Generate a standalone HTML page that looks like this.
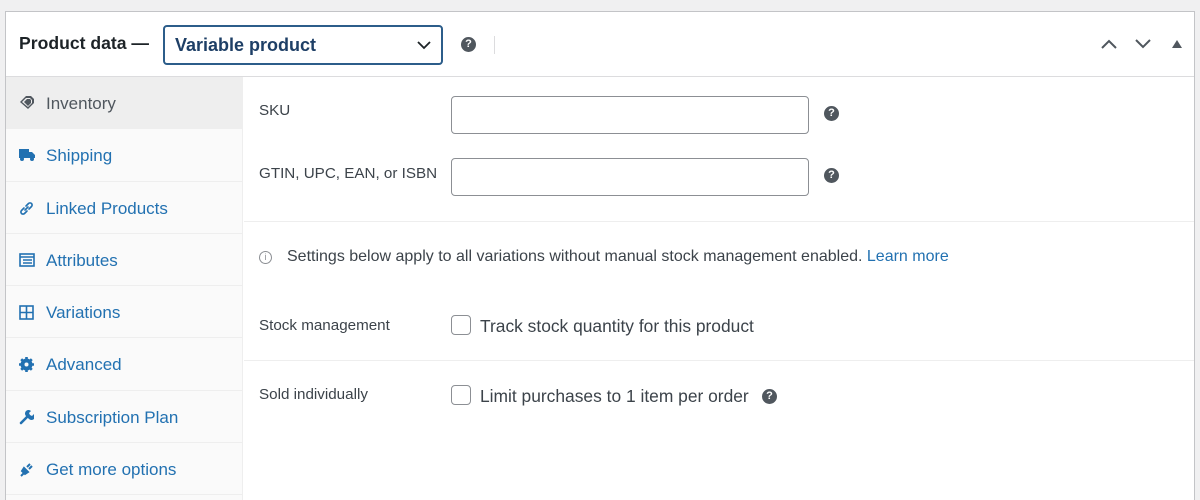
<!DOCTYPE html>
<html style="height:500px;overflow:hidden"><head><style>
*{box-sizing:border-box;margin:0;padding:0}
body{width:1200px;height:500px;background:#f0f0f1;font-family:"Liberation Sans",sans-serif;position:relative;overflow:hidden}
.box{position:absolute;left:5px;top:11px;width:1190px;height:489px;background:#fff;border:1px solid #c3c4c7;border-bottom:none}
.hdr{position:absolute;left:0;top:0;right:0;height:65px;border-bottom:1px solid #dcdcde}
.t{position:absolute;left:13px;top:21px;font-size:17.6px;font-weight:bold;color:#1d2327}
.sel{position:absolute;left:157px;top:13px;width:280px;height:40px;border:2px solid #2c5d8a;border-radius:4px;font-size:18px;font-weight:bold;color:#1e3f66;padding:8px 10px}
.q{position:absolute;width:15px;height:15px;border-radius:50%;background:#50575e;color:#fff;font-size:11px;font-weight:bold;text-align:center;line-height:15px}
.side{position:absolute;left:0;top:65px;width:237px;bottom:0;background:#fafafa;border-right:1px solid #eee}
.it{height:52.3px;border-bottom:1px solid #eee;color:#2271b1;font-size:17px;padding-left:40px;line-height:54px;position:relative}
.it.a{background:#eee;color:#50575e}
.it svg{position:absolute;left:13px;top:19px}
.lbl{position:absolute;font-size:15.2px;color:#3c434a}
.inp{position:absolute;left:445px;width:358px;height:38px;border:1px solid #8c8f94;border-radius:4px}
.cb{position:absolute;left:445px;width:20px;height:20px;border:1px solid #8c8f94;border-radius:4px}
.hr{position:absolute;left:238px;right:0;height:1px;background:#eee}
.ck{font-size:17.4px}
</style></head><body>
<div class="box">
<div class="hdr">
<div class="t">Product data —</div>
<div class="sel">Variable product
<svg style="position:absolute;right:10px;top:14px" width="14" height="9" viewBox="0 0 14 9"><path d="M1 1l6 6 6-6" stroke="#1d2327" stroke-width="1.8" fill="none"/></svg></div>
<div class="q" style="left:455px;top:25px">?</div>
<div style="position:absolute;left:488px;top:24px;width:1px;height:18px;background:#dcdcde"></div>
<svg style="position:absolute;left:1095px;top:27px" width="16" height="10"><path d="M1 9l7-7 7 7" stroke="#50575e" stroke-width="2" fill="none"/></svg>
<svg style="position:absolute;left:1129px;top:27px" width="16" height="10"><path d="M1 1l7 7 7-7" stroke="#50575e" stroke-width="2" fill="none"/></svg>
<svg style="position:absolute;left:1166px;top:28px" width="10" height="8"><path d="M0 8L5 0l5 8z" fill="#50575e"/></svg>
</div>
<div class="side">
<div class="it a"><svg width="16" height="15" viewBox="0 0 16 15" style="top:18px"><path d="M1 7l6-6h5l3 3v4l-6 6z" fill="#50575e"/><path d="M3 7l4-4h4l2 2v3l-4 4z" fill="#eee"/><path d="M5 7l3-3h3l1 1v3l-3 3z" fill="#50575e"/></svg>Inventory</div>
<div class="it"><svg width="16" height="14" viewBox="0 0 16 14"><path d="M0 1h10v9H0zM10 4h3l3 3v3h-6z" fill="#2271b1"/><circle cx="3" cy="11" r="2" fill="#2271b1"/><circle cx="13" cy="11" r="2" fill="#2271b1"/></svg>Shipping</div>
<div class="it"><svg width="15" height="15" viewBox="0 0 15 15"><path d="M6 9l3-3M5 7L2.5 9.5a2 2 0 003 3L8 10M10 8l2.5-2.5a2 2 0 00-3-3L7 5" stroke="#2271b1" stroke-width="1.6" fill="none" stroke-linecap="round"/></svg>Linked Products</div>
<div class="it"><svg width="16" height="14" viewBox="0 0 16 14"><rect x="1" y="1" width="14" height="12" fill="none" stroke="#2271b1" stroke-width="1.6"/><path d="M1 4h14M4 7h9M4 10h9" stroke="#2271b1" stroke-width="1.6"/></svg>Attributes</div>
<div class="it"><svg width="15" height="15" viewBox="0 0 15 15"><rect x="1" y="1" width="13" height="13" fill="none" stroke="#2271b1" stroke-width="1.6"/><path d="M7.5 1v13M1 7.5h13" stroke="#2271b1" stroke-width="1.6"/></svg>Variations</div>
<div class="it"><svg width="15" height="15" viewBox="0 0 15 15"><circle cx="7.5" cy="7.5" r="4.5" fill="none" stroke="#2271b1" stroke-width="3"/><path d="M7.5 0v15M0 7.5h15M2.2 2.2l10.6 10.6M12.8 2.2L2.2 12.8" stroke="#2271b1" stroke-width="2.6"/><circle cx="7.5" cy="7.5" r="2" fill="#fafafa"/></svg>Advanced</div>
<div class="it"><svg width="15" height="15" viewBox="0 0 15 15"><path d="M2 13l6-6" stroke="#2271b1" stroke-width="2.6" stroke-linecap="round"/><path d="M7 6a3.5 3.5 0 015-5l-2 2 1 2 2 1 2-2a3.5 3.5 0 01-5 5z" fill="#2271b1"/></svg>Subscription Plan</div>
<div class="it"><svg width="15" height="15" viewBox="0 0 15 15"><path d="M2 14l3-3M5 6l4 4-3 2-3-3zM8 5l3-3M10 7l3-3" stroke="#2271b1" stroke-width="2" fill="#2271b1"/></svg>Get more options</div>
</div>
<div class="lbl" style="left:253px;top:90px">SKU</div>
<div class="inp" style="top:84px"></div>
<div class="q" style="left:818px;top:94px">?</div>
<div class="lbl" style="left:253px;top:153px">GTIN, UPC, EAN, or ISBN</div>
<div class="inp" style="top:146px"></div>
<div class="q" style="left:818px;top:156px">?</div>
<div class="hr" style="top:209px"></div>
<div class="lbl" style="left:253px;top:236px;font-size:16px"><span style="display:inline-block;width:13px;height:13px;border:1px solid #8c8f94;border-radius:50%;font-size:9px;text-align:center;line-height:11px;color:#8c8f94;vertical-align:1px;margin-right:15px">i</span>Settings below apply to all variations without manual stock management enabled. <span style="color:#2271b1">Learn more</span></div>
<div class="lbl" style="left:253px;top:305px">Stock management</div>
<div class="cb" style="top:303px"></div>
<div class="lbl ck" style="left:474px;top:304px">Track stock quantity for this product</div>
<div class="hr" style="top:348px"></div>
<div class="lbl" style="left:253px;top:374px">Sold individually</div>
<div class="cb" style="top:373px"></div>
<div class="lbl ck" style="left:474px;top:374px">Limit purchases to 1 item per order</div>
<div class="q" style="left:756px;top:377px">?</div>
</div>
</body></html>
